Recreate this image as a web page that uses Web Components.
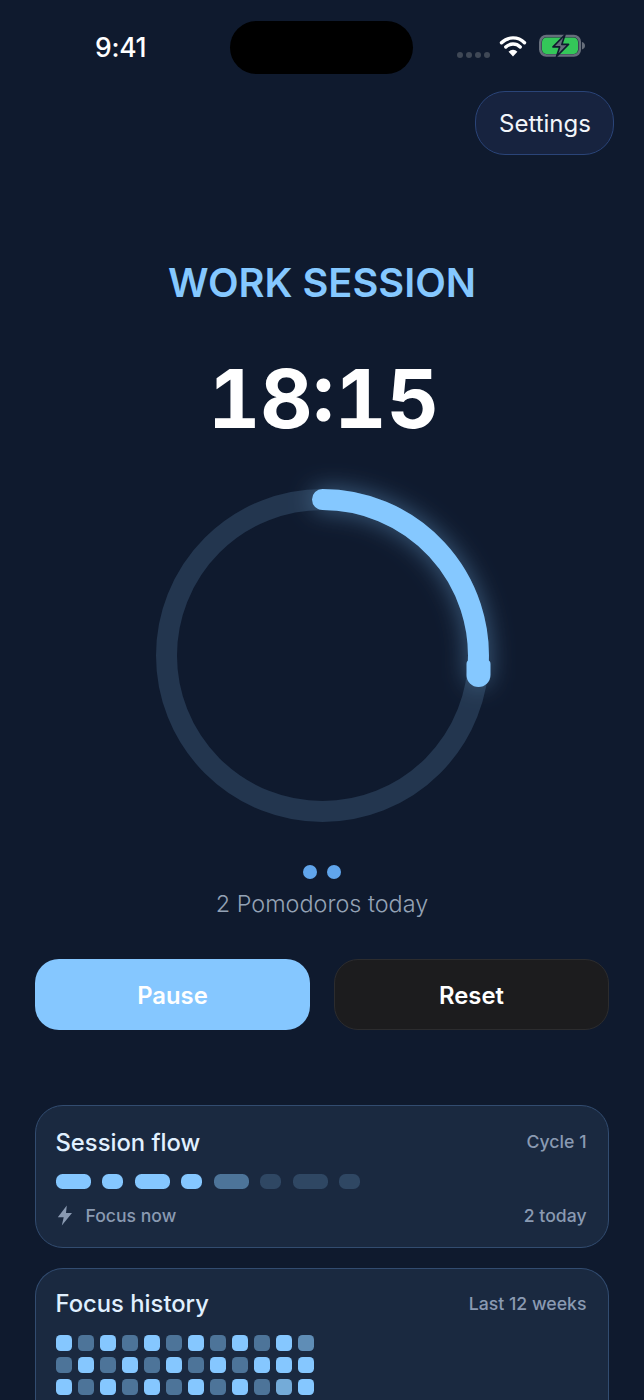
<!DOCTYPE html>
<html lang="en"><head><meta charset="utf-8"><title>Pomodoro</title>
<style>
html,body{margin:0;padding:0;height:1400px;overflow:hidden;background:#0f1a2e}
body{font-family:Inter,"Liberation Sans",sans-serif;color:#fff}
app-shell{display:block;height:1400px;overflow:hidden}
</style></head><body>
<app-shell>
  <status-bar></status-bar>
  <top-actions><pill-button>Settings</pill-button></top-actions>
  <session-timer label="WORK SESSION" time="18:15"></session-timer>
  <pomodoro-count count="2">2 Pomodoros today</pomodoro-count>
  <action-row>
    <action-button kind="primary">Pause</action-button>
    <action-button kind="secondary">Reset</action-button>
  </action-row>
  <card-stack>
    <info-card>
      <span slot="title">Session flow</span>
      <span slot="meta">Cycle 1</span>
      <flow-bars></flow-bars>
      <span slot="foot-left" class="f">Focus now</span>
      <span slot="foot-right">2 today</span>
    </info-card>
    <info-card history>
      <span slot="title">Focus history</span>
      <span slot="meta">Last 12 weeks</span>
      <history-grid></history-grid>
    </info-card>
  </card-stack>
</app-shell>
<script>
function def(name, css, html){
  customElements.define(name, class extends HTMLElement{
    constructor(){super();const s=this.attachShadow({mode:'open'});
      s.innerHTML='<style>'+css+'</style>'+(typeof html==='function'?html(this):html);}
  });
}
def('status-bar',`
:host{display:grid;grid-template-columns:230px 183px 1fr;height:53px;padding-top:21px;align-items:center}
.t{font:500 26.500px/1 Inter,sans-serif;padding-left:95px;color:#fff;letter-spacing:-.3px}
.i{background:#000;height:53px;border-radius:26.500px}
.r{display:flex;align-items:center;padding-left:44px;height:53px}
.d{display:flex;gap:3px;margin-top:14px}
.d b{width:6px;height:6px;border-radius:50%;background:#3f4856;display:block}
svg{display:block}
`,`<div class="t">9:41</div><div class="i"></div>
<div class="r"><div class="d"><b></b><b></b><b></b><b></b></div>
<svg style="margin-left:9px;margin-top:-5px" width="28" height="23" viewBox="0 0 28 23"><path d="M2.500 8.800a16 16 0 0 1 23 0M6.800 13a10.200 10.200 0 0 1 14.400 0" fill="none" stroke="#fff" stroke-width="3.400" stroke-linecap="round"/><path d="M14 22.500l-4.400-4.800a6.200 6.200 0 0 1 8.800 0z" fill="#fff"/></svg>
<svg style="margin-left:12px;margin-top:-5px" width="47" height="23" viewBox="0 0 47 23"><rect x="3" y="3.500" width="36" height="16.500" rx="4.500" fill="#34c759"/><rect x="1.300" y="2" width="39.500" height="19.500" rx="6" fill="none" stroke="#666e7b" stroke-width="2.600"/><path d="M43 8c2 .6 3 2 3 3.700s-1 3.100-3 3.700z" fill="#666e7b"/><path d="M26 .8 14 12.900h6.700L17.500 22.500 29.500 10.400h-6.700z" fill="#666e7b" stroke="#0f1a2e" stroke-width="1.600" stroke-linejoin="round"/></svg>
</div>`);
def('top-actions',`:host{display:flex;justify-content:flex-end;padding:17px 30px 0 0}`,`<slot></slot>`);
def('pill-button',`
:host{display:flex;align-items:center;justify-content:center;box-sizing:border-box;width:139px;height:64px;padding:2px 0 0 1px;border-radius:30px;background:#17233f;border:1.500px solid #2a4478;font:400 24px/1 Inter,sans-serif;color:#f2f5fa}
`,`<slot></slot>`);
def('session-timer',`
:host{display:flex;flex-direction:column;align-items:center;padding-top:106px}
.l{font:600 39.800px/44px Inter,sans-serif;color:#85c8ff}
.t{font:700 81px/100px Inter,sans-serif;color:#fff;margin-top:44px;padding-left:3px;font-variant-numeric:tabular-nums}
svg{display:block;margin-top:40px;overflow:visible}
`,h=>`<div class="l">${h.getAttribute('label')}</div><div class="t">${h.getAttribute('time')}</div>
<svg width="333" height="333" viewBox="0 0 333 333">
<defs><filter id="g" x="-30%" y="-30%" width="160%" height="160%"><feGaussianBlur stdDeviation="12"/></filter></defs>
<circle cx="166.500" cy="166.500" r="156" fill="none" stroke="#23364f" stroke-width="21"/>
<path d="M166.500 10.500A156 156 0 0 1 322.500 166.500V186" fill="none" stroke="#85c8ff" stroke-opacity=".42" stroke-width="21" stroke-linecap="round" filter="url(#g)"/>
<path d="M166.500 10.500A156 156 0 0 1 322 178.500" fill="none" stroke="#85c8ff" stroke-width="21" stroke-linecap="round"/>
<path d="M310.500 175a4 4 0 0 1 4-4h16a4 4 0 0 1 4 4v11a12 12 0 0 1-24 0z" fill="#85c8ff"/>
</svg>`);
def('pomodoro-count',`
:host{display:flex;flex-direction:column;align-items:center;padding-top:43px;color:#94a2b5;font:300 23.400px/30px Inter,sans-serif}
.d{display:flex;gap:10px;margin-bottom:10px}
.d b{display:block;width:14px;height:14px;border-radius:50%;background:#60a5ec}
`,h=>`<div class="d">${'<b></b>'.repeat(+h.getAttribute('count'))}</div><slot></slot>`);
def('action-row',`:host{display:grid;grid-template-columns:1fr 1fr;gap:24px;padding:40px 35px 0}`,`<slot></slot>`);
def('action-button',`
:host{display:flex;align-items:center;justify-content:center;box-sizing:border-box;height:71px;padding-top:2px;border-radius:24px;font:600 23.800px/1 Inter,sans-serif;color:#fff}
:host([kind=primary]){background:#85c7ff}
:host([kind=secondary]){background:#1c1c1e;border:1.500px solid #2c2c2e}
`,`<slot></slot>`);
def('card-stack',`:host{display:flex;flex-direction:column;gap:20px;padding:75px 35px 0}`,`<slot></slot>`);
def('info-card',`
:host{display:block;box-sizing:border-box;padding:20px 21.500px 19px 19.500px;border-radius:28px;background:#1a2940;border:1.500px solid #324c70}
.h{display:flex;justify-content:space-between;align-items:center;height:32px}
.ti{font:500 23.800px/32px Inter,sans-serif;color:#e0f0ff;padding-top:2px}
.m{font:500 17.700px/24px Inter,sans-serif;color:#8a9ab2}
.c{margin-top:16px}
.f{display:flex;justify-content:space-between;align-items:center;margin-top:15px;height:24px;font:500 17.600px/24px Inter,sans-serif;color:#8a9ab2}
.fl{display:flex;align-items:center;gap:13px}
svg{display:block;margin-left:1px}
:host([history]) .f{display:none}
:host([history]) .c{margin-top:15px}
:host([history]) .ti{padding-top:0}
:host([history]){height:132px;padding-top:19px;border-bottom:0;border-radius:28px 28px 0 0}
`,`<div class="h"><span class="ti"><slot name="title"></slot></span><span class="m"><slot name="meta"></slot></span></div>
<div class="c"><slot></slot></div>
<div class="f"><span class="fl"><svg width="16" height="21" viewBox="0 0 16 21"><path d="M9.800.5 .8 12.300h5.900L4.800 20.500l10.200-12.600H9z" fill="#8a9ab2"/></svg><slot name="foot-left"></slot></span><slot name="foot-right"></slot></div>`);
def('flow-bars',`
:host{display:flex;gap:11.750px}
b{display:block;height:14.500px;border-radius:6.500px}
.w{width:35px}.n{width:20.500px}
.a{background:#85c7ff}.m{background:#4d7499}.o{background:#2f4763}
`,['w a','n a','w a','n a','w m','n o','w o','n o'].map(c=>`<b class="${c}"></b>`).join(''));
def('history-grid',`
:host{display:grid;grid-template-columns:repeat(12,16.500px);gap:5.500px}
b{display:block;height:16.500px;border-radius:4.500px}
.H{background:#85c7ff}.L{background:#4d7499}.M{background:#5f8db6}.T{background:#74abd8}
`,['HLHLHLHLHLHM','LHLHLHLHLHHH','HLHLHLHLHLTH'].join('').split('').map(c=>`<b class="${c}"></b>`).join(''));
</script>
</body></html>
